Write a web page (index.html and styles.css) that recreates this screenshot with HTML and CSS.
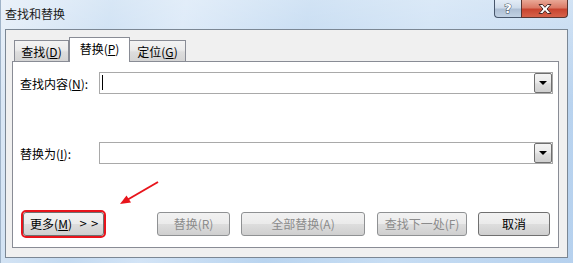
FILE: index.html
```html
<!DOCTYPE html>
<html>
<head>
<meta charset="utf-8">
<link rel="stylesheet" href="styles.css">
</head>
<body>
<div class="window">
  <div class="titlebar">
    <span class="title">查找和替换</span>
    <div class="caption">
      <div class="cap-help"><span class="qmark">?</span></div>
      <div class="cap-close">
        <svg width="16" height="12" viewBox="0 0 16 12">
          <path d="M2 1.5 L5.5 1.5 L8 4.3 L10.5 1.5 L14 1.5 L10 6 L14 10.5 L10.5 10.5 L8 7.7 L5.5 10.5 L2 10.5 L6 6 Z" fill="#ffffff" stroke="#4a2a26" stroke-width="1" stroke-linejoin="round"/>
        </svg>
      </div>
    </div>
  </div>
  <div class="client">
    <div class="tabs">
      <div class="tab tab-find">查找(<u>D</u>)</div>
      <div class="tab tab-replace active">替换(<u>P</u>)</div>
      <div class="tab tab-goto">定位(<u>G</u>)</div>
    </div>
    <div class="panel">
      <div class="row">
        <span class="label">查找内容(<u>N</u>):</span>
        <div class="combo">
          <div class="field"><span class="caret"></span></div>
          <div class="drop"><span class="tri"></span></div>
        </div>
      </div>
      <div class="row row2">
        <span class="label">替换为(<u>I</u>):</span>
        <div class="combo">
          <div class="field"></div>
          <div class="drop"><span class="tri"></span></div>
        </div>
      </div>
      <div class="buttons">
        <div class="btn btn-more">更多(<u>M</u>)<span class="chev">&gt; &gt;</span></div>
        <div class="btn disabled btn-replace">替换(R)</div>
        <div class="btn disabled btn-all">全部替换(A)</div>
        <div class="btn disabled btn-next">查找下一处(F)</div>
        <div class="btn btn-cancel">取消</div>
      </div>
    </div>
  </div>
  <svg class="arrow" width="573" height="263" viewBox="0 0 573 263">
    <line x1="157" y1="182" x2="126" y2="200" stroke="#e8141b" stroke-width="2"/>
    <polygon points="119,204 125.5,195.5 130,202.5" fill="#e8141b"/>
  </svg>
</div>
</body>
</html>
```
FILE: styles.css
```css
html, body {
  margin: 0;
  padding: 0;
}
body {
  width: 573px;
  height: 263px;
  overflow: hidden;
  font-family: "Noto Sans CJK SC", "Microsoft YaHei", sans-serif;
  font-size: 12px;
  color: #000;
}
.window {
  position: relative;
  width: 573px;
  height: 263px;
  box-sizing: border-box;
  background:
    linear-gradient(180deg, rgba(255,255,255,0.35) 0%, rgba(255,255,255,0) 40%),
    linear-gradient(100deg, #dfeaf6 0%, #c3daf1 18%, #d3e4f6 30%, #b9d4ef 50%, #c7ddf3 70%, #b6d1ee 100%);
  border-left: 1px solid #9fb3c8;
}
.titlebar {
  display: flex;
  align-items: flex-start;
  height: 29px;
}
.title {
  padding-left: 4px;
  padding-top: 6px;
  line-height: 16px;
  color: #1a1a1a;
}
.caption {
  margin-left: auto;
  margin-right: 5px;
  display: flex;
}
.cap-help {
  width: 27px;
  height: 18px;
  box-sizing: border-box;
  border: 1px solid #47566b;
  border-top: none;
  border-right: none;
  border-bottom-left-radius: 4px;
  background: linear-gradient(180deg, #e3ecf6 0%, #cfdceb 45%, #aebfd4 55%, #c1d1e3 100%);
  display: flex;
  justify-content: center;
  align-items: center;
}
.qmark {
  font-family: "DejaVu Sans", sans-serif;
  font-weight: bold;
  font-size: 13px;
  line-height: 14px;
  color: #fff;
  -webkit-text-stroke: 1px #3d4a5c;
  paint-order: stroke fill;
}
.cap-close {
  width: 47px;
  height: 18px;
  box-sizing: border-box;
  border: 1px solid #5a3530;
  border-top: none;
  border-bottom-right-radius: 4px;
  background: linear-gradient(180deg, #e9a896 0%, #db7a66 45%, #c8442f 55%, #d6624a 100%);
  display: flex;
  justify-content: center;
  align-items: center;
}
.client {
  margin-left: 4px;
  width: 563px;
  height: 229px;
  box-sizing: border-box;
  border: 1px solid #7b8794;
  background: #f0f0f0;
  padding: 7px 0 0 6px;
}
.tabs {
  display: flex;
  align-items: flex-end;
  height: 24px;
  margin-left: 2px;
}
.tab {
  box-sizing: border-box;
  height: 21px;
  border: 1px solid #898c95;
  border-bottom: none;
  background: linear-gradient(180deg, #f3f3f3 0%, #ebebeb 45%, #dddddd 55%, #d4d4d4 100%);
  text-align: center;
  padding-top: 2px;
  line-height: 17px;
}
.tab-find { width: 55px; }
.tab-replace { width: 61px; }
.tab-goto { width: 57px; margin-left: -1px; }
.tab.active {
  height: 25px;
  margin-bottom: -1px;
  background: #fff;
  position: relative;
  z-index: 1;
  padding-top: 2px;
}
.panel {
  box-sizing: border-box;
  width: 547px;
  height: 187px;
  border: 1px solid #898c95;
  background: #fff;
  padding: 10px 0 0 7px;
}
.row {
  display: flex;
  align-items: center;
  height: 22px;
}
.row2 {
  margin-top: 48px;
}
.label {
  width: 79px;
  line-height: 16px;
  padding-top: 2px;
}
.combo {
  box-sizing: border-box;
  width: 454px;
  height: 22px;
  border: 1px solid #a9a9a9;
  display: flex;
  background: #fff;
}
.field {
  flex: 1;
  position: relative;
}
.caret {
  position: absolute;
  left: 2px;
  top: 2px;
  width: 1px;
  height: 15px;
  background: #000;
}
.drop {
  box-sizing: border-box;
  width: 18px;
  height: 20px;
  border: 1px solid #6f6f6f;
  border-radius: 2px;
  background: linear-gradient(180deg, #f4f4f4 0%, #ebebeb 45%, #dddddd 55%, #cfcfcf 100%);
  display: flex;
  justify-content: center;
  align-items: center;
}
.tri {
  width: 0;
  height: 0;
  border-left: 4px solid transparent;
  border-right: 4px solid transparent;
  border-top: 4px solid #000;
}
.buttons {
  display: flex;
  margin-top: 48px;
  padding-left: 3px;
}
.btn {
  box-sizing: border-box;
  height: 24px;
  border: 1px solid #707070;
  border-radius: 3px;
  background: linear-gradient(180deg, #f2f2f2 0%, #ebebeb 48%, #dddddd 52%, #cfcfcf 100%);
  display: flex;
  justify-content: center;
  align-items: center;
  line-height: 16px;
}
.btn.disabled {
  color: #8b8b8b;
  border-color: #8f9193;
}
.btn-more {
  width: 81px;
  outline: 2px solid #e8141b;
  outline-offset: 0;
  padding-left: 2px;
}
.chev {
  margin-left: 7px;
  font-size: 10px;
  font-family: "DejaVu Sans", sans-serif;
}
.btn-replace { width: 73px; margin-left: 53px; }
.btn-all { width: 124px; margin-left: 11px; }
.btn-next { width: 90px; margin-left: 12px; }
.btn-cancel { width: 72px; margin-left: 11px; }
.arrow {
  position: absolute;
  left: 0;
  top: 0;
  pointer-events: none;
}
```
